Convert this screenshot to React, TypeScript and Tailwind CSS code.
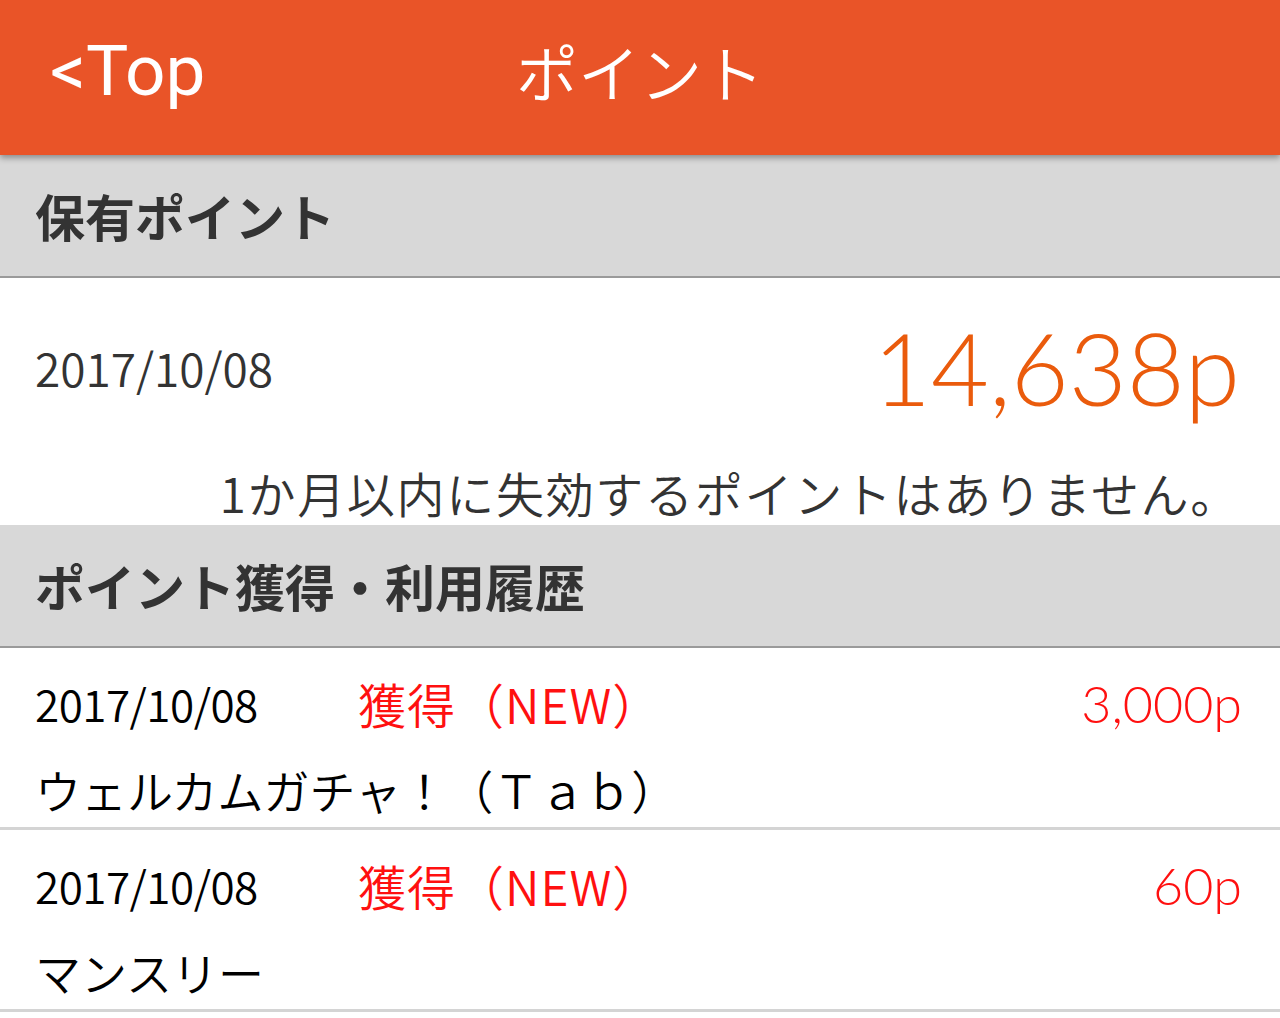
import React from "react";

type HistoryItem = {
  date: string;
  kind: string;
  amount: string;
  title: string;
};

const history: HistoryItem[] = [
  { date: "2017/10/08", kind: "獲得（NEW）", amount: "3,000p", title: "ウェルカムガチャ！（Ｔａｂ）" },
  { date: "2017/10/08", kind: "獲得（NEW）", amount: "60p", title: "マンスリー" },
];

const jp = "font-['Noto_Sans_CJK_JP',sans-serif]";

function SectionHeader({ label }: { label: string }) {
  return (
    <div className="flex h-[123px] items-center border-b-2 border-[#9a9a9a] bg-[#d8d8d8] px-[35px]">
      <h2 className={`${jp} text-[50px] font-bold text-[#333333]`}>{label}</h2>
    </div>
  );
}

export default function App() {
  return (
    <div className="min-h-[1018px] w-[1280px] overflow-hidden bg-white">
      <header className="relative z-10 grid h-[155px] grid-cols-3 items-center bg-[#e95428] px-[50px] pb-[14px] shadow-[0_3px_6px_rgba(0,0,0,0.35)]">
        <span className="font-['Roboto',sans-serif] text-[71px] leading-none text-white">&lt;Top</span>
        <h1 className={`${jp} text-center text-[62px] font-[350] leading-none text-white`}>ポイント</h1>
        <span />
      </header>

      <SectionHeader label="保有ポイント" />

      <section className="flex h-[247px] flex-col pl-[35px] pr-[40px]">
        <div className="flex h-[178px] items-center justify-between">
          <span className={`${jp} text-[46px] font-[350] text-[#333333]`}>2017/10/08</span>
          <span className="font-['Lato',sans-serif] text-[100px] font-light leading-none text-[#ea5b0c]">
            14,638p
          </span>
        </div>
        <p className={`${jp} mt-[12px] text-right text-[48px] font-[350] leading-none tracking-[1.7px] text-[#333333]`}>
          1か月以内に失効するポイントはありません。
        </p>
      </section>

      <SectionHeader label="ポイント獲得・利用履歴" />

      <ul>
        {history.map((item, i) => (
          <li
            key={i}
            className="flex h-[182px] flex-col justify-center border-b-[3px] border-[#d4d4d4] pl-[35px] pr-[38px]"
          >
            <div className="flex items-center">
              <span className={`${jp} w-[323px] text-[44px] font-[350] tracking-[-0.5px] text-black`}>
                {item.date}
              </span>
              <span className={`${jp} text-[48px] font-[350] tracking-[1px] text-[#ff1010]`}>{item.kind}</span>
              <span className="ml-auto font-['Lato',sans-serif] text-[52px] font-light text-[#ff1010]">
                {item.amount}
              </span>
            </div>
            <div className={`${jp} mt-[24px] text-[46px] font-[350] leading-none text-black`}>{item.title}</div>
          </li>
        ))}
      </ul>
    </div>
  );
}
